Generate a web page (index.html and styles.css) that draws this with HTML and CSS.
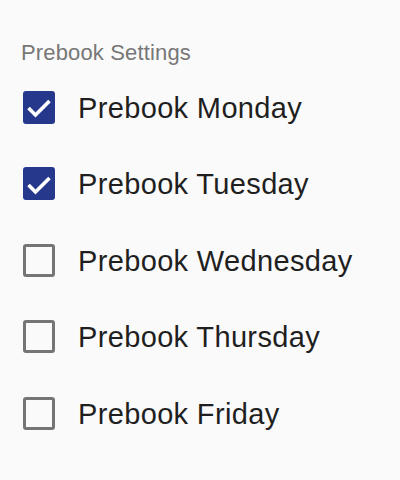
FILE: index.html
```html
<!DOCTYPE html>
<html>
<head>
<meta charset="utf-8">
<link rel="stylesheet" href="styles.css">
</head>
<body>
<div class="settings">
  <div class="title">Prebook Settings</div>
  <div class="list">
    <label class="row">
      <span class="box checked"><svg viewBox="0 0 32 32" width="32" height="32"><polyline points="5.5,17 12.5,24 26.5,10" fill="none" stroke="#fff" stroke-width="3.6"/></svg></span>
      <span class="label">Prebook Monday</span>
    </label>
    <label class="row">
      <span class="box checked"><svg viewBox="0 0 32 32" width="32" height="32"><polyline points="5.5,17 12.5,24 26.5,10" fill="none" stroke="#fff" stroke-width="3.6"/></svg></span>
      <span class="label">Prebook Tuesday</span>
    </label>
    <label class="row">
      <span class="box"></span>
      <span class="label">Prebook Wednesday</span>
    </label>
    <label class="row">
      <span class="box"></span>
      <span class="label">Prebook Thursday</span>
    </label>
    <label class="row">
      <span class="box"></span>
      <span class="label">Prebook Friday</span>
    </label>
  </div>
</div>
</body>
</html>
```
FILE: styles.css
```css
html, body {
  margin: 0;
  background: #fafafa;
}
body {
  font-family: "Liberation Sans", Arial, sans-serif;
}
.settings {
  padding: 40px 0 0 21px;
}
.title {
  font-size: 22px;
  line-height: 26px;
  letter-spacing: 0.15px;
  color: #777777;
}
.list {
  display: flex;
  flex-direction: column;
  padding-top: 3px;
}
.row {
  display: flex;
  align-items: center;
  height: 76.5px;
}
.box {
  box-sizing: border-box;
  width: 32px;
  height: 33px;
  margin-left: 2px;
  border: 3px solid #757575;
  border-radius: 3px;
  display: flex;
  align-items: center;
  justify-content: center;
  flex: none;
}
.box.checked {
  background: #25388b;
  border: none;
}
.label {
  margin-left: 23px;
  padding-top: 2px;
  font-size: 29px;
  letter-spacing: 0.35px;
  color: #1f1f1f;
}
```
